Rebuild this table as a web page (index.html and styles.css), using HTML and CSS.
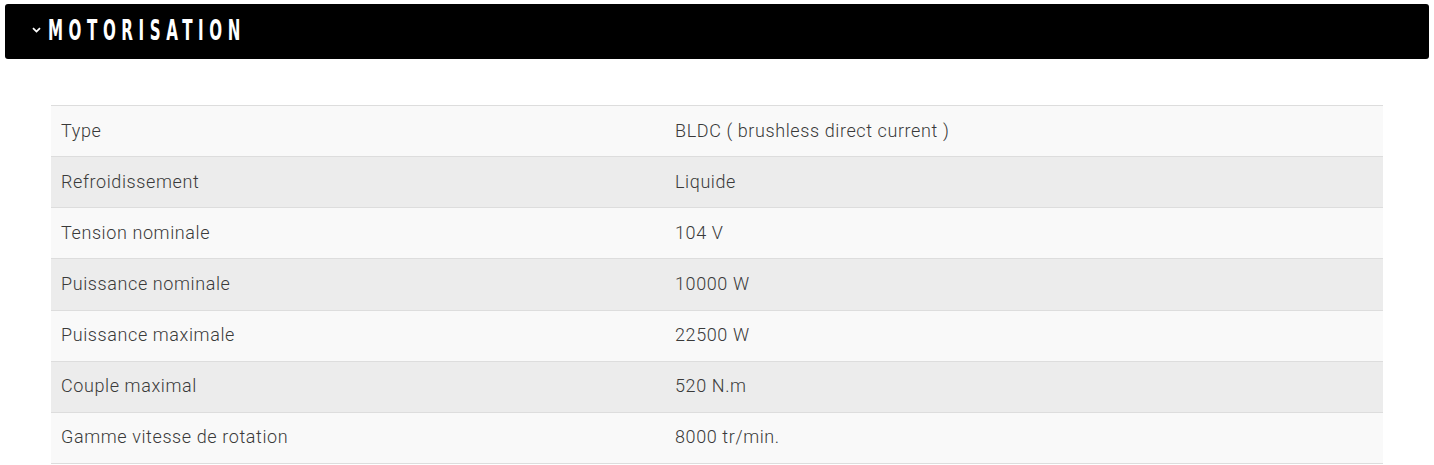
FILE: index.html
```html
<!DOCTYPE html>
<html lang="fr">
<head>
<meta charset="utf-8">
<title>Motorisation</title>
<link rel="stylesheet" href="styles.css">
</head>
<body>
<section class="spec">
  <h2 class="spec-head">
    <svg class="chev" width="9" height="6" viewBox="0 0 9 6"><path d="M1 1.2 L4.5 4.6 L8 1.2" fill="none" stroke="#fff" stroke-width="1.8"/></svg>
    <span class="spec-title">MOTORISATION</span>
  </h2>
  <div class="spec-body">
    <table class="spec-table">
      <tbody>
        <tr><td class="k">Type</td><td>BLDC ( brushless direct current )</td></tr>
        <tr><td class="k">Refroidissement</td><td>Liquide</td></tr>
        <tr><td class="k">Tension nominale</td><td>104 V</td></tr>
        <tr><td class="k">Puissance nominale</td><td>10000 W</td></tr>
        <tr><td class="k">Puissance maximale</td><td>22500 W</td></tr>
        <tr><td class="k">Couple maximal</td><td>520 N.m</td></tr>
        <tr><td class="k">Gamme vitesse de rotation</td><td>8000 tr/min.</td></tr>
      </tbody>
    </table>
  </div>
</section>
</body>
</html>
```
FILE: styles.css
```css
html, body { margin: 0; background: #fff; }
body { padding: 4px 5px 0 5px; }
.spec-head {
  margin: 0;
  height: 55px;
  background: #000;
  border-radius: 3px;
  display: flex;
  align-items: center;
  padding-left: 27px;
  gap: 7px;
}
.chev { display: block; margin-top: -4px; }
.spec-title {
  font-family: "DejaVu Sans Condensed", "DejaVu Sans", sans-serif;
  font-weight: bold;
  font-size: 28px;
  color: #fff;
  letter-spacing: 9.3px;
  display: inline-block;
  transform: scaleX(0.6);
  transform-origin: left center;
  line-height: 1;
  margin-top: -2px;
}
.spec-body { padding: 46px 46px 0 46px; }
.spec-table {
  width: 1332px;
  border-collapse: collapse;
  border-top: 1px solid #ddd;
  font-family: Roboto, "Liberation Sans", sans-serif;
  font-weight: 300;
  font-size: 18px;
  letter-spacing: 0.6px;
  color: #3a3a3a;
}
.spec-table td {
  height: 48.15px;
  padding: 0 10px 2px 10px;
  border-bottom: 1px solid #ddd;
  vertical-align: middle;
}
.spec-table td.k { width: 594px; }
.spec-table tr:nth-child(odd) { background: #f9f9f9; }
.spec-table tr:nth-child(even) { background: #ececec; }
```
